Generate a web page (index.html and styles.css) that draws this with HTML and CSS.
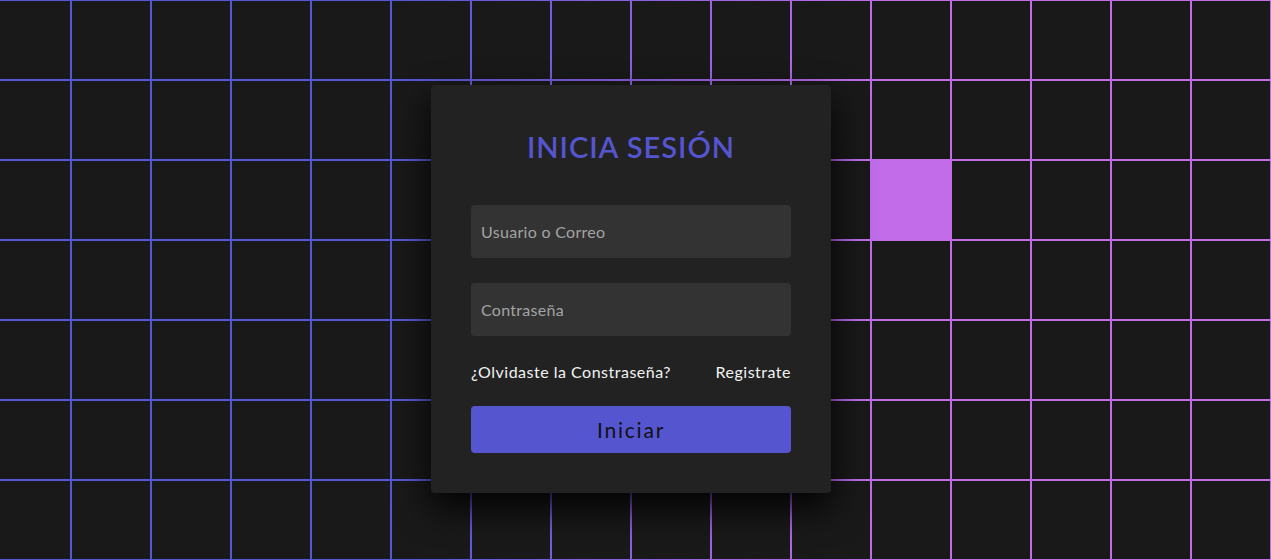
FILE: index.html
```html
<!DOCTYPE html>
<html lang="es">
<head>
<meta charset="utf-8">
<title>Inicia Sesión</title>
<link rel="stylesheet" href="styles.css">
</head>
<body>
<section class="stage">
  <div class="grid" id="grid"></div>
  <form class="card" onsubmit="return false">
    <h2 class="title">INICIA SESIÓN</h2>
    <div class="fields">
      <input class="field" type="text" placeholder="Usuario o Correo">
      <input class="field" type="password" placeholder="Contraseña">
    </div>
    <div class="links">
      <a href="#" class="link">¿Olvidaste la Constraseña?</a>
      <a href="#" class="link">Registrate</a>
    </div>
    <button class="submit" type="submit">Iniciar</button>
  </form>
</section>
<script>
  var g = document.getElementById('grid');
  for (var r = 0; r < 7; r++) {
    for (var c = 0; c < 17; c++) {
      var s = document.createElement('span');
      s.className = 'cell' + (r === 2 && c === 11 ? ' lit' : '');
      g.appendChild(s);
    }
  }
</script>
</body>
</html>
```
FILE: styles.css
```css
* { box-sizing: border-box; margin: 0; padding: 0; }
html, body { width: 100%; height: 100%; overflow: hidden; }
body {
  background: #191919;
  font-family: "Lato", "Open Sans", sans-serif;
}
.stage {
  width: 100%;
  height: 560px;
  overflow: hidden;
  background: linear-gradient(to right, #5656d8 0%, #5656d8 32%, #c26ce9 70%, #c26ce9 100%);
  display: flex;
  align-items: center;
  justify-content: center;
  position: relative;
}
.grid {
  position: absolute;
  left: -8px;
  top: 1px;
  display: grid;
  grid-template-columns: repeat(17, 78px);
  grid-auto-rows: 78px;
  gap: 2px;
}
.cell { background: #191919; }
.cell.lit { background: transparent; }
.card {
  position: relative;
  z-index: 1;
  width: 400px;
  margin-top: 18px;
  margin-right: 9px;
  background: #222222;
  border-radius: 4px;
  box-shadow: 0 15px 35px rgba(0, 0, 0, 0.9);
  padding: 40px;
  display: flex;
  flex-direction: column;
}
.title {
  color: #5555d0;
  font-size: 29px;
  font-weight: 600;
  text-align: center;
  letter-spacing: 1px;
  line-height: 40px;
  margin-top: 2px;
  margin-bottom: -2px;
}
.fields {
  margin-top: 40px;
  display: flex;
  flex-direction: column;
  gap: 25px;
}
.field {
  height: 53px;
  border: none;
  outline: none;
  border-radius: 4px;
  background: #333333;
  color: #fff;
  padding: 0 10px;
  font-family: inherit;
  font-size: 16px;
  letter-spacing: 0.3px;
}
.field::placeholder { color: #a3a3a3; }
.links {
  margin-top: 26px;
  display: flex;
  justify-content: space-between;
  line-height: 20px;
}
.link {
  color: #f2f2f2;
  text-decoration: none;
  font-size: 16px;
  letter-spacing: 0.5px;
}
.submit {
  margin-top: 24px;
  height: 47px;
  border: none;
  border-radius: 4px;
  background: #5555d0;
  color: #111;
  font-family: inherit;
  font-size: 21px;
  letter-spacing: 1.8px;
}
```
